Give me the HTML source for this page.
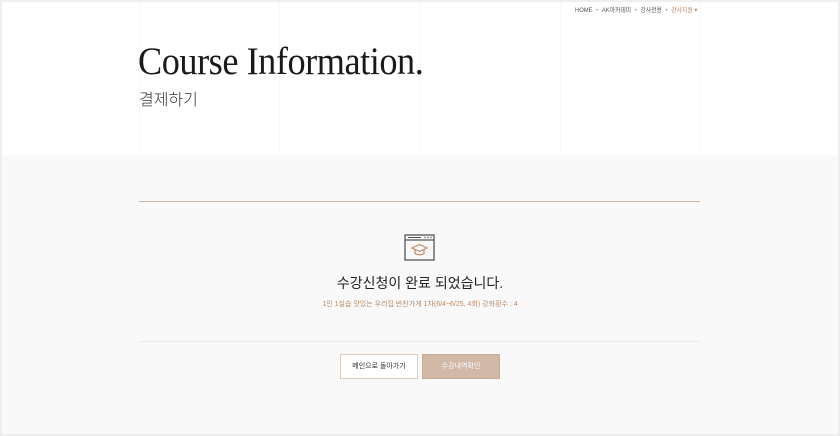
<!DOCTYPE html>
<html><head><meta charset="utf-8"><style>
*{margin:0;padding:0;box-sizing:border-box}
body{width:840px;height:436px;background:#eeeeee;position:relative;overflow:hidden;font-family:"Liberation Sans","Noto Sans CJK KR",sans-serif}
.frame{position:absolute;left:2px;top:2px;width:836px;height:432px;background:#f9f9f9;overflow:hidden}
.head{position:absolute;left:0;top:0;width:836px;height:153px;background:#fff}
.vl{position:absolute;top:0;height:153px;width:1px;background:#f8f8f8}
.nav{position:absolute;top:2px;left:573px;font-size:6.5px;color:#555;white-space:nowrap;transform:scaleX(0.9);transform-origin:left}
.nav span.d{margin:0 4px;color:#999}
.nav .on{color:#b8876a}
h1{position:absolute;left:136px;top:37px;font-family:"Liberation Serif","Noto Serif CJK SC",serif;font-weight:normal;font-size:39px;color:#1a1a1a;letter-spacing:-0.5px;transform:scaleX(0.93);transform-origin:left;white-space:nowrap}
.sub{position:absolute;left:137px;top:84px;font-size:16px;color:#333;font-weight:300}
.l1{position:absolute;left:137px;top:199px;width:561px;height:1px;background:#cdb3a1}
.l2{position:absolute;left:137px;top:339px;width:561px;height:1px;background:#ececec}
.t1{position:absolute;left:0;width:836px;top:271px;text-align:center;font-size:14px;color:#222}
.t2{position:absolute;left:0;width:836px;top:297px;text-align:center;font-size:7px;color:#b88a6c}
.b{position:absolute;top:352px;height:25px;width:78px;font-size:7px;text-align:center;line-height:23px}
.b1{left:338px;background:#fff;border:1px solid #dccabd;color:#333}
.b2{left:420px;background:#d2b8a6;border:1px solid #c9ab96;color:#fff}
</style></head><body><div class="frame">
<div class="head">
<div class="vl" style="left:137px"></div><div class="vl" style="left:277px"></div><div class="vl" style="left:418px"></div><div class="vl" style="left:558px"></div><div class="vl" style="left:698px"></div>
<div class="nav">HOME<span class="d">•</span>AK아카데미<span class="d">•</span>강사전용<span class="d">•</span><span class="on">강사지원 ▾</span></div>
<h1>Course Information.</h1>
<div class="sub">결제하기</div>
</div>
<div class="l1"></div>
<svg style="position:absolute;left:402px;top:232px" width="32" height="28" viewBox="0 0 32 28">
<rect x="1" y="1" width="29" height="25" fill="none" stroke="#555" stroke-width="1.3"/>
<line x1="1" y1="6" x2="30" y2="6" stroke="#555" stroke-width="1.2"/>
<line x1="4" y1="3.5" x2="17" y2="3.5" stroke="#555" stroke-width="1"/>
<circle cx="21" cy="3.5" r="0.7" fill="#555"/><circle cx="24" cy="3.5" r="0.7" fill="#555"/><circle cx="27" cy="3.5" r="0.7" fill="#555"/>
<path d="M8 14 L15.5 10.5 L23 14 L15.5 17.5 Z" fill="none" stroke="#c08a68" stroke-width="1.2"/>
<path d="M11 15.5 V19.5 Q15.5 22 20 19.5 V15.5" fill="none" stroke="#c08a68" stroke-width="1.2"/>
</svg>
<div class="t1">수강신청이 완료 되었습니다.</div>
<div class="t2">1인 1실습 맛있는 우리집 반찬가게 1차(6/4~6/25, 4회) 강좌횟수 : 4</div>
<div class="l2"></div>
<div class="b b1">메인으로 돌아가기</div>
<div class="b b2">수강내역확인</div>
</div></body></html>
